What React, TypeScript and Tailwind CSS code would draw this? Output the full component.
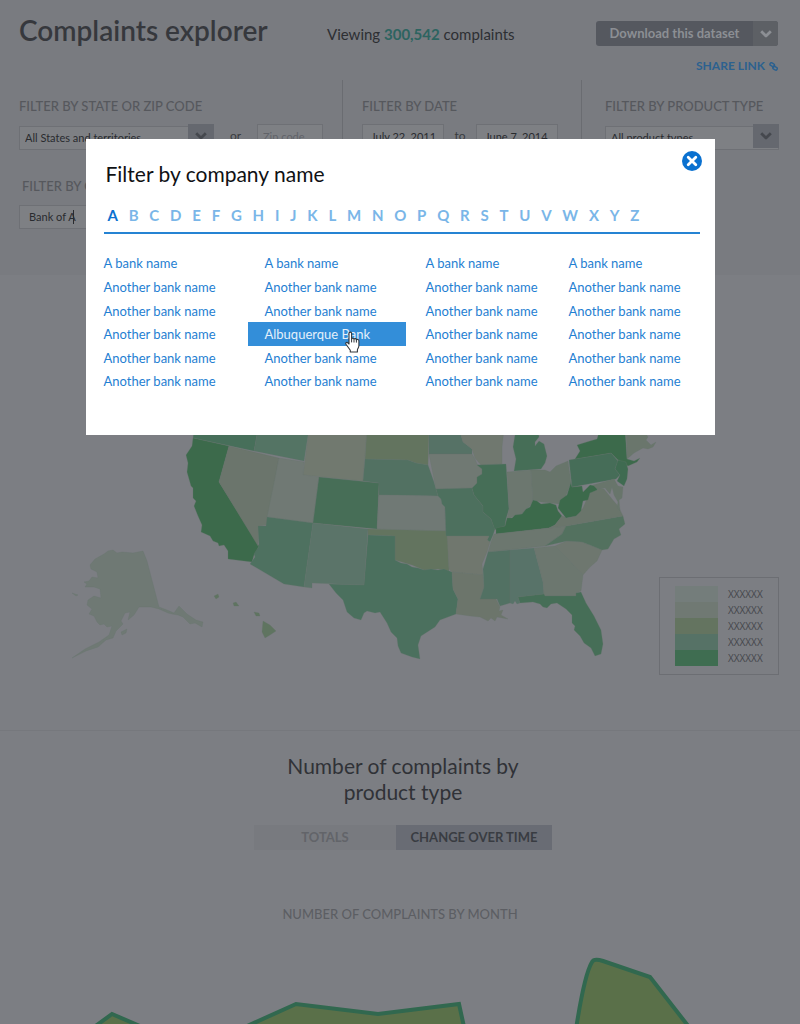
import type { ReactNode } from "react";

const alphabet = "ABCDEFGHIJKLMNOPQRSTUVWXYZ".split("");

const banks = [
  ["A bank name", "Another bank name", "Another bank name", "Another bank name", "Another bank name", "Another bank name"],
  ["A bank name", "Another bank name", "Another bank name", "Albuquerque Bank", "Another bank name", "Another bank name"],
  ["A bank name", "Another bank name", "Another bank name", "Another bank name", "Another bank name", "Another bank name"],
  ["A bank name", "Another bank name", "Another bank name", "Another bank name", "Another bank name", "Another bank name"],
];

const states: { id: string; fill: string; points: string }[] = [
  { id: "OR", fill: "#476f5a", points: "194,430 193,439 254,452 258,430" },
  { id: "ID", fill: "#547464", points: "258,430 254,452 304,462 309,430" },
  { id: "WY", fill: "#71796f", points: "309,430 303,476 363,482 367,430" },
  { id: "SD", fill: "#63745f", points: "367,430 365,460 408,461 416,464 428,466 429,430" },
  { id: "MN", fill: "#567266", points: "429,430 459,430 463,443 472,450 472,455 429,455" },
  { id: "WI", fill: "#70786f", points: "459,430 504,430 502,448 502,465 481,466 475,459 472,450 463,443" },
  { id: "CA", fill: "#3c6a4b", points: "193,439 229,447 219,483 259,547 257,552 254,556 252,563 228,560 228,552 224,546 219,547 218,544 213,542 210,537 201,533 202,526 198,517 194,507 196,502 193,499 193,489 191,487 187,473 188,464 186,456 192,447" },
  { id: "NV", fill: "#6b756c", points: "229,447 279,459 267,526 259,527 258,547 219,483" },
  { id: "UT", fill: "#707974", points: "279,459 304,463 303,476 319,478 313,524 267,518" },
  { id: "CO", fill: "#476e57", points: "319,478 379,484 377,530 313,524" },
  { id: "AZ", fill: "#4e7160", points: "267,518 313,524 304,588 284,585 250,565 255,558 254,555 259,547 258,527 266,527" },
  { id: "NM", fill: "#5b7469", points: "313,524 368,530 364,586 312,584 312,589 304,588" },
  { id: "NE", fill: "#527162", points: "365,460 408,461 416,464 428,466 434,483 438,497 379,496 379,484 363,482" },
  { id: "KS", fill: "#707975", points: "379,496 438,497 441,500 442,505 445,508 446,532 377,530" },
  { id: "OK", fill: "#63745f", points: "368,530 446,532 448,540 449,572 438,570 424,571 412,566 395,561 395,537 368,536" },
  { id: "TX", fill: "#4b705e", points: "368,536 395,537 395,561 401,564 407,565 412,568 418,569 424,571 431,570 438,571 444,570 452,573 453,590 458,600 456,615 440,621 435,628 421,637 418,646 420,660 412,658 401,654 398,647 397,639 391,633 387,624 380,613 375,614 367,612 364,614 361,621 354,619 347,613 343,601 336,594 329,585 364,586" },
  { id: "IA", fill: "#707973", points: "429,455 472,455 475,460 477,465 482,468 482,475 477,478 477,484 472,489 436,490 432,470" },
  { id: "MO", fill: "#4d705e", points: "436,490 472,489 474,496 483,507 483,513 491,520 495,530 493,536 490,543 487,541 489,537 446,537 445,508 442,505 441,500 438,497" },
  { id: "IL", fill: "#466e57", points: "477,466 506,465 509,510 506,520 505,527 496,530 495,531 491,520 483,513 483,507 474,496 472,489 477,484 477,478 482,475 482,470" },
  { id: "MI", fill: "#466e57", points: "516,430 538,430 539,438 535,443 535,447 539,442 544,445 547,457 545,464 541,470 514,472 516,460 513,448" },
  { id: "IN", fill: "#6c776f", points: "507,473 531,471 533,501 530,507 526,510 522,515 516,516 510,519 507,520 509,510" },
  { id: "OH", fill: "#68756b", points: "531,471 545,471 550,473 556,467 568,462 571,483 566,497 559,505 550,504 541,503 533,501" },
  { id: "KY", fill: "#3c6a4b", points: "533,501 537,502 541,505 550,504 556,506 558,512 562,517 555,526 549,529 506,534 496,535 496,529 505,527 507,519 512,519 515,516 522,515 526,510 530,508" },
  { id: "TN", fill: "#6c776f", points: "494,535 549,529 566,527 562,535 545,547 488,553 491,543" },
  { id: "AR", fill: "#70776e", points: "447,537 489,537 487,541 490,543 487,553 482,565 483,576 452,573 449,570" },
  { id: "LA", fill: "#6c756b", points: "452,573 483,576 484,588 480,600 496,600 500,608 499,612 503,611 501,616 508,620 497,618 495,622 491,619 488,622 480,618 470,617 456,615 458,600 453,590" },
  { id: "MS", fill: "#527163", points: "488,553 510,551 510,604 500,607 497,600 480,600 484,588 483,570" },
  { id: "AL", fill: "#587369", points: "510,551 534,549 543,583 544,595 518,598 520,604 517,605 515,602 513,605 510,604" },
  { id: "GA", fill: "#6c776f", points: "534,549 555,547 570,562 583,576 581,592 576,594 576,597 544,597 543,583" },
  { id: "SC", fill: "#6e776f", points: "555,547 567,542 582,543 590,546 602,551 597,562 590,568 583,576 570,562" },
  { id: "NC", fill: "#53715f", points: "566,527 623,517 625,525 619,530 621,536 614,540 608,550 602,551 590,546 582,543 567,542 545,547 562,535" },
  { id: "FL", fill: "#466e57", points: "518,598 544,595 545,597 576,597 576,594 581,593 586,604 594,617 601,631 603,645 601,655 595,657 591,649 584,644 580,637 574,631 575,627 572,624 572,616 566,610 557,604 551,605 547,609 543,608 540,605 533,603 520,604" },
  { id: "VA", fill: "#6a756b", points: "562,517 568,519 576,517 583,509 588,497 595,488 604,490 612,500 618,507 623,517 566,527 549,529 555,526" },
  { id: "WV", fill: "#3c6a4b", points: "571,483 572,488 582,487 583,493 590,486 597,487 597,491 590,494 588,501 583,502 581,512 576,517 566,519 558,509 560,501 567,496" },
  { id: "PA", fill: "#466d58", points: "569,461 575,460 611,454 618,462 615,470 620,476 616,480 572,488" },
  { id: "MD", fill: "#68756b", points: "593,486 614,480 618,487 623,488 622,499 619,501 620,512 617,509 618,503 614,496 612,488 610,495 605,489 597,490" },
  { id: "NY", fill: "#3c6a4b", points: "575,460 580,452 577,446 590,442 597,440 600,430 625,430 627,460 634,462 640,459 637,463 628,467 618,461 611,454" },
  { id: "NJ", fill: "#3f6b51", points: "618,461 626,463 628,470 627,480 624,487 617,482 620,476 615,470" },
  { id: "NE-coast", fill: "#6a766c", points: "626,430 643,430 648,438 646,441 651,446 656,443 653,448 648,450 643,449 634,454 627,460" },
  { id: "AK", fill: "#6f7974", points: "95,560 104,555 108,552 113,551 117,554 122,553 133,554 143,552 147,562 159,608 167,611 174,614 179,607 187,615 196,621 203,623 202,628 195,624 190,625 183,618 178,616 172,615 168,614 159,610 151,608 139,608 134,616 128,621 130,613 125,614 121,622 123,625 116,632 113,639 106,641 98,648 86,652 72,659 85,650 99,643 109,636 112,627 107,628 104,625 100,626 97,623 94,617 89,615 92,610 87,606 88,601 94,597 101,599 100,590 94,588 85,588 87,585 84,583 89,582 92,578 98,579 97,573 91,570 90,566" },
  { id: "AK-1", fill: "#6f7974", points: "121,633 127,630 126,634 122,636" },
  { id: "AK-2", fill: "#6f7974", points: "72,594 78,596 76,597" },
  { id: "HI-1", fill: "#5f7460", points: "214,597 218,595 219,598 216,600" },
  { id: "HI-2", fill: "#5f7460", points: "233,604 236,603 239,607 234,607" },
  { id: "HI-3", fill: "#5f7460", points: "254,613 259,614 260,617 256,617" },
  { id: "HI-4", fill: "#5f7460", points: "263,622 270,626 276,632 270,636 265,639 262,633" },
];

const legend = ["bg-[#747d7b]", "bg-[#707973]", "bg-[#647460]", "bg-[#567266]", "bg-[#3f6d51]"];

function Chevron({ className }: { className: string }) {
  return (
    <svg viewBox="0 0 12 8" className={className} fill="none" stroke="currentColor" strokeWidth="2.8" aria-hidden="true">
      <path d="M1.2 1.2 6 6l4.8-4.8" strokeLinejoin="round" />
    </svg>
  );
}

function FilterHeading({ htmlFor, children }: { htmlFor: string; children: ReactNode }) {
  return (
    <label htmlFor={htmlFor} className="block whitespace-nowrap text-[13px] leading-4 font-medium text-[#56585d]">
      {children}
    </label>
  );
}

function Select({ id, options, className }: { id: string; options: string[]; className: string }) {
  return (
    <div className={`relative h-6 ${className}`}>
      <select id={id} className="h-6 w-full appearance-none border border-[#6e7075] bg-[#7e8084] pl-[5px] text-[11px] text-[#292b2f]">
        {options.map((o) => (
          <option key={o}>{o}</option>
        ))}
      </select>
      <span className="pointer-events-none absolute inset-y-0 right-0 flex w-[26px] items-center justify-center bg-[#65686f] text-[#45484e]">
        <Chevron className="h-2 w-3" />
      </span>
    </div>
  );
}

const field = "h-6 border border-[#6e7075] bg-[#7e8084] text-[11px] text-[#292b2f] placeholder-[#616369]";

function Filters() {
  return (
    <>
      <div className="mt-[5px] flex">
        <section className="w-[343px] border-r border-[#6a6c71] pt-[18px] pb-3 pl-[19px]">
          <FilterHeading htmlFor="state">FILTER BY STATE OR ZIP CODE</FilterHeading>
          <div className="mt-[10px] flex items-center">
            <Select id="state" options={["All States and territories"]} className="w-[195px]" />
            <span className="w-[43px] text-center text-xs text-[#393b3f]">or</span>
            <input aria-label="Zip code" placeholder="Zip code" className={`${field} w-[66px] px-[5px]`} />
          </div>
        </section>
        <section className="w-[239px] border-r border-[#6a6c71] pt-[18px] pb-3 pl-[19px]">
          <FilterHeading htmlFor="from">FILTER BY DATE</FilterHeading>
          <div className="mt-[10px] flex items-center">
            <input id="from" defaultValue="July 22, 2011" className={`${field} w-[82px] pl-2`} />
            <span className="w-8 text-center text-xs text-[#393b3f]">to</span>
            <input aria-label="End date" defaultValue="June 7, 2014" className={`${field} w-[82px] pl-2`} />
          </div>
        </section>
        <section className="flex-1 pt-[18px] pr-[21px] pb-3 pl-[23px]">
          <FilterHeading htmlFor="product">FILTER BY PRODUCT TYPE</FilterHeading>
          <Select id="product" options={["All product types"]} className="mt-[10px]" />
        </section>
      </div>
      <section className="pt-[18px] pb-[46px] pl-[19px]">
        <div className="pl-[3px]">
          <FilterHeading htmlFor="company">FILTER BY COMPANY NAME</FilterHeading>
        </div>
        <div className={`${field} mt-[11px] flex w-[195px] items-center pl-[9px]`}>
          <input id="company" defaultValue="Bank of A" className="w-12 bg-transparent outline-none" />
          <span className="-ml-1 h-3.5 w-px bg-[#292b2f]" />
        </div>
      </section>
    </>
  );
}

function ComplaintMap() {
  return (
    <section className="relative bg-[#7c7e83]">
      <svg viewBox="0 276 800 455" className="block w-full" role="img" aria-label="Complaints by state">
        {states.map((s) => (
          <polygon key={s.id} points={s.points} fill={s.fill} stroke="#67766b" strokeOpacity="0.45" strokeWidth="0.6" strokeLinejoin="round" />
        ))}
      </svg>
      <div className="absolute right-[21px] bottom-[55px] flex h-[98px] w-[120px] items-center gap-[10px] border border-[#6c6e73] pl-[15px]">
        <div className="w-[43px]">
          {legend.map((c) => (
            <div key={c} className={`h-4 ${c}`} />
          ))}
        </div>
        <div className="font-['Open_Sans',sans-serif] text-[10px] font-medium text-[#45474c]">
          {legend.map((c) => (
            <div key={c} className="h-4 leading-4">XXXXXX</div>
          ))}
        </div>
      </div>
    </section>
  );
}

function Chart() {
  return (
    <section className="border-t border-[#76787d] bg-[#7c7e83] pt-[22px]">
      <div className="flex flex-col items-center pl-[6px]">
        <h2 className="w-[260px] text-center text-[21px] leading-[26px] text-[#303237]">
          Number of complaints by product type
        </h2>
        <div className="mt-5 flex h-[25px] text-[13px] font-bold">
          <button className="w-[142px] bg-[#787a7f] text-[#626469]">TOTALS</button>
          <button className="w-[156px] bg-[#696c74] text-[#393c42]">CHANGE OVER TIME</button>
        </div>
      </div>
      <h3 className="mt-[56px] text-center text-[13px] leading-4 font-medium text-[#5c5e63]">NUMBER OF COMPLAINTS BY MONTH</h3>
      <svg viewBox="0 922 800 102" className="block w-full" role="img" aria-label="Complaints by month">
        <g fill="#5a7049" stroke="#31684f" strokeWidth="4">
          <path d="M86 1033 112 1014 156 1033" />
          <path d="M225 1036 296 1004 378 1014 459 1004 466 1036" />
          <path d="M575 1036C580 1002 586 972 592 962Q594 958 603 961L650 977 696 1036" />
        </g>
      </svg>
    </section>
  );
}

function HandCursor() {
  return (
    <svg viewBox="0 0 16 22" className="pointer-events-none absolute top-[9px] left-[97px] z-10 h-[22px] w-4" aria-hidden="true">
      <path
        d="M4 2.2C4 .7 6.6.7 6.6 2.2V8c.3-1.2 2.4-1 2.4.3.4-1.1 2.4-.8 2.4.6.5-1 2.5-.6 2.5.9v5c0 1.8-1.3 2.8-1.5 4.2V21H5.3v-1.8L1 13.2c-.8-1.2.7-2.5 1.8-1.4L4 13Z"
        fill="#fff"
        stroke="#33363b"
        strokeWidth="1.1"
        strokeLinejoin="round"
      />
      <path d="M6.6 8v3.4M9 8.5v3M11.4 9v2.6" stroke="#33363b" />
    </svg>
  );
}

function CompanyDialog() {
  return (
    <div className="absolute inset-x-0 top-[139px] flex justify-center px-4">
      <div role="dialog" aria-labelledby="dialog-title" className="w-full max-w-[629px] bg-white px-[18px] pt-3 pb-[42px]">
        <div className="flex items-start justify-between">
          <h2 id="dialog-title" className="mt-[11px] pl-0.5 text-[21px] leading-6 text-[#101114]">
            Filter by company name
          </h2>
          <button aria-label="Close" className="-mr-[5px]">
            <svg viewBox="0 0 20 20" className="block size-5" aria-hidden="true">
              <circle cx="10" cy="10" r="10" fill="#0a71d0" />
              <path d="m6.2 6.2 7.6 7.6m0-7.6-7.6 7.6" stroke="#fff" strokeWidth="2.8" strokeLinecap="round" />
            </svg>
          </button>
        </div>
        <nav className="mt-[19px] mr-[-3px] border-b-2 border-[#2583d3] pr-[60px] pb-[7px] pl-1">
          <ul className="flex justify-between text-[15px] leading-5 font-bold">
            {alphabet.map((l) => (
              <li key={l}>
                <a href={`#${l}`} className={l === "A" ? "text-[#0a71d0]" : "text-[#7ab6e8]"}>
                  {l}
                </a>
              </li>
            ))}
          </ul>
        </nav>
        <div className="mt-[17px] grid grid-cols-[161px_161px_143px_1fr] text-[13px] text-[#1f80d2]">
          {banks.map((col, i) => (
            <ul key={i}>
              {col.map((name, j) =>
                name.startsWith("Alb") ? (
                  <li key={j} className="relative -mr-0.5 -ml-[17px] h-6 w-[158px] bg-[#338ed9] pl-[17px] text-[#e4f0fb]">
                    <a href="#bank" className="block leading-6">{name}</a>
                    <HandCursor />
                  </li>
                ) : (
                  <li key={j} className={j % 2 || j === 0 ? "h-6" : "h-[23px]"}>
                    <a href="#bank" className="block whitespace-nowrap leading-6">{name}</a>
                  </li>
                ),
              )}
            </ul>
          ))}
        </div>
      </div>
    </div>
  );
}

export default function App() {
  return (
    <div className="relative min-h-screen overflow-hidden bg-[#797b80] font-['Lato',sans-serif]">
      <header className="flex h-[75px] items-start pr-[22px] pl-[19px]">
        <h1 className="w-[308px] pt-3 text-[28px] leading-9 font-semibold text-[#36383d]">Complaints explorer</h1>
        <p className="pt-6 text-[15px] leading-5 text-[#2d2f33]">
          Viewing <strong className="text-[#2d6460]">300,542</strong> complaints
        </p>
        <div className="ml-auto flex flex-col items-end pt-[21px]">
          <div className="flex h-[25px] overflow-hidden rounded-[3px] bg-[#55585f] text-[#8c8f94]">
            <button className="w-[157px] text-[13px] font-bold">Download this dataset</button>
            <button aria-label="Download options" className="flex w-[25px] items-center justify-center bg-[#5d6065]">
              <Chevron className="h-2 w-3" />
            </button>
          </div>
          <a href="#share" className="mt-3 flex items-center gap-1 text-xs leading-4 font-bold text-[#2c618f]">
            SHARE LINK
            <svg viewBox="0 0 10 10" className="size-[9px]" fill="none" stroke="currentColor" strokeWidth="1.6" aria-hidden="true">
              <rect x="0.9" y="1.3" width="5.2" height="3.2" rx="1.6" transform="rotate(28 3.5 3)" />
              <rect x="4.2" y="5.3" width="5" height="3.2" rx="1.6" transform="rotate(28 6.6 7)" />
              <path d="M6.6 3.6 3.8 6.6" />
            </svg>
          </a>
        </div>
      </header>
      <Filters />
      <ComplaintMap />
      <Chart />
      <CompanyDialog />
    </div>
  );
}
